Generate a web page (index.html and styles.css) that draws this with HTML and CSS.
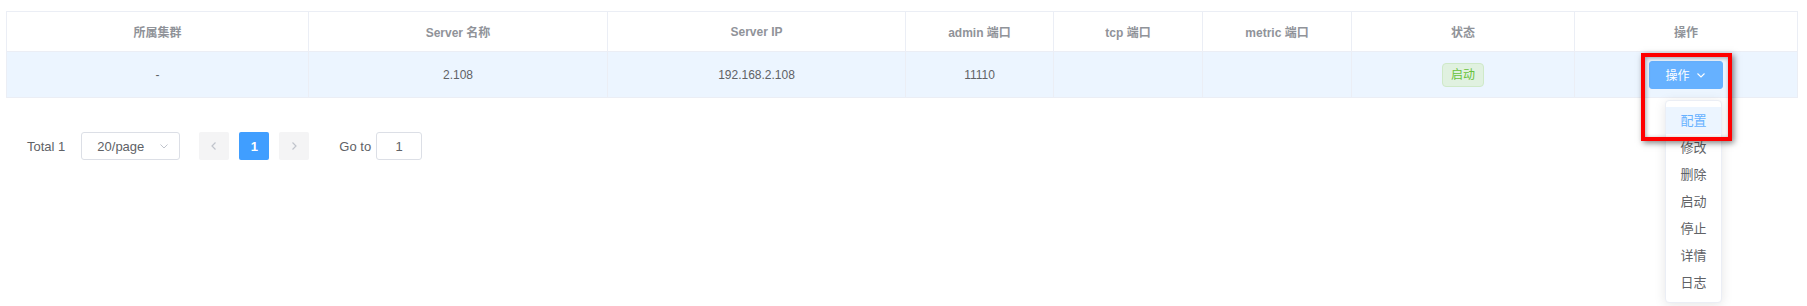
FILE: index.html
```html
<!DOCTYPE html>
<html lang="zh-CN">
<head>
    <meta charset="UTF-8">
    <meta name="viewport" content="width=device-width, initial-scale=1.0">
    <title>Server 列表</title>
    <link rel="stylesheet" href="styles.css">
</head>
<body>
    <div class="page">
        <table class="server-table">
            <colgroup>
                <col class="col-cluster">
                <col class="col-name">
                <col class="col-ip">
                <col class="col-port">
                <col class="col-port2">
                <col class="col-port2">
                <col class="col-status">
                <col class="col-op">
            </colgroup>
            <thead>
                <tr>
                    <th>所属集群</th>
                    <th>Server 名称</th>
                    <th>Server IP</th>
                    <th>admin 端口</th>
                    <th>tcp 端口</th>
                    <th>metric 端口</th>
                    <th>状态</th>
                    <th>操作</th>
                </tr>
            </thead>
            <tbody>
                <tr class="current-row">
                    <td>-</td>
                    <td>2.108</td>
                    <td>192.168.2.108</td>
                    <td>11110</td>
                    <td></td>
                    <td></td>
                    <td><span class="tag tag-success">启动</span></td>
                    <td>
                        <div class="dropdown">
                            <button class="btn btn-primary">操作<svg class="btn-icon" viewBox="0 0 12 12" width="12" height="12"><path d="M2.5 4.5 L6 8 L9.5 4.5" fill="none" stroke="#fff" stroke-width="1.1"/></svg></button>
                            <ul class="dropdown-menu">
                                <li class="active">配置</li>
                                <li>修改</li>
                                <li>删除</li>
                                <li>启动</li>
                                <li>停止</li>
                                <li>详情</li>
                                <li>日志</li>
                            </ul>
                        </div>
                    </td>
                </tr>
            </tbody>
        </table>

        <div class="pagination">
            <span class="total">Total 1</span>
            <div class="sizes">
                <span>20/page</span>
                <svg viewBox="0 0 12 12" width="12" height="12"><path d="M2.5 4.5 L6 8 L9.5 4.5" fill="none" stroke="#c0c4cc" stroke-width="1"/></svg>
            </div>
            <button class="pg-btn" disabled><svg viewBox="0 0 12 12" width="12" height="12"><path d="M7.5 2.5 L4 6 L7.5 9.5" fill="none" stroke="#c0c4cc" stroke-width="1.2"/></svg></button>
            <span class="pg-btn pg-active">1</span>
            <button class="pg-btn" disabled><svg viewBox="0 0 12 12" width="12" height="12"><path d="M4.5 2.5 L8 6 L4.5 9.5" fill="none" stroke="#c0c4cc" stroke-width="1.2"/></svg></button>
            <span class="jump">Go to</span>
            <input class="jump-input" type="text" value="1">
        </div>

        <div class="highlight-box"></div>
    </div>
</body>
</html>
```

FILE: styles.css
```css
html, body {
    margin: 0;
    min-height: 306px;
}
body {
    font-family: "Liberation Sans", "Noto Sans CJK SC", sans-serif;
    background-color: #ffffff;
    color: #606266;
}
.page {
    position: relative;
    box-sizing: border-box;
    min-height: 306px;
    padding: 11px 0 0 6px;
}
.server-table {
    width: 1792px;
    table-layout: fixed;
    border-collapse: separate;
    border-spacing: 0;
    border-top: 1px solid #ebeef5;
    border-left: 1px solid #ebeef5;
    font-size: 12px;
}
.col-cluster { width: 302px; }
.col-name { width: 299px; }
.col-ip { width: 298px; }
.col-port { width: 148px; }
.col-port2 { width: 149px; }
.col-status { width: 223px; }
.col-op { width: 223px; }
th, td {
    box-sizing: border-box;
    padding: 0 10px;
    border-right: 1px solid #ebeef5;
    border-bottom: 1px solid #ebeef5;
    text-align: center;
    vertical-align: middle;
}
th {
    height: 40px;
    color: #909399;
    font-weight: bold;
}
td {
    height: 46px;
    color: #606266;
}
.current-row td {
    background-color: #ecf5ff; /* highlighted row */
}
.tag {
    display: inline-block;
    box-sizing: border-box;
    height: 24px;
    line-height: 22px;
    padding: 0 8px;
    font-size: 12px;
    border-radius: 4px;
    border: 1px solid;
}
.tag-success {
    background-color: #e0f1e0;
    border-color: #cfe9c8;
    color: #67c23a;
}
.dropdown {
    display: inline-block;
    position: relative;
}
.btn {
    display: inline-flex;
    align-items: center;
    box-sizing: border-box;
    height: 28px;
    padding: 0 15px;
    font-family: inherit;
    font-size: 12px;
    border-radius: 3px;
    border: 1px solid;
    cursor: pointer;
}
.btn-primary {
    background-color: #66b1ff; /* hover state */
    border-color: #66b1ff;
    color: #ffffff;
}
.btn-icon {
    margin-left: 5px;
}
.dropdown-menu {
    position: absolute;
    top: 39px;
    left: 16px;
    z-index: 10;
    margin: 0;
    padding: 6px 0;
    list-style: none;
    background: #ffffff;
    border: 1px solid #ebeef5;
    border-radius: 4px;
    box-shadow: 0 2px 12px 0 rgba(0, 0, 0, 0.1);
    white-space: nowrap;
}
.dropdown-menu li {
    padding: 0 14px;
    line-height: 27px;
    font-size: 13px;
    color: #606266;
    text-align: left;
}
.dropdown-menu li.active {
    background-color: #ecf5ff;
    color: #66b1ff;
}
.pagination {
    display: flex;
    align-items: center;
    margin-top: 34px;
    padding-left: 21px;
    height: 28px;
    font-size: 13px;
    color: #606266;
}
.total {
    margin-right: 16px;
}
.sizes {
    display: flex;
    align-items: center;
    justify-content: space-between;
    box-sizing: border-box;
    width: 99px;
    height: 28px;
    padding: 0 9px 0 15px;
    border: 1px solid #dcdfe6;
    border-radius: 3px;
    margin-right: 19px;
}
.pg-btn {
    display: inline-flex;
    align-items: center;
    justify-content: center;
    box-sizing: border-box;
    width: 30px;
    height: 28px;
    margin-right: 10px;
    padding: 0;
    border: none;
    border-radius: 2px;
    background-color: #f4f4f5;
    font-family: inherit;
    font-size: 13px;
}
.pg-active {
    background-color: #409eff;
    color: #ffffff;
    font-weight: bold;
}
.jump {
    margin-left: 20px;
    margin-right: 5px;
}
.jump-input {
    box-sizing: border-box;
    width: 46px;
    height: 28px;
    border: 1px solid #dcdfe6;
    border-radius: 3px;
    text-align: center;
    font-family: inherit;
    font-size: 13px;
    color: #606266;
}
/* annotation drawn over the screenshot */
.highlight-box {
    position: absolute;
    left: 1641px;
    top: 53px;
    width: 91px;
    height: 88px;
    box-sizing: border-box;
    border: 4px solid #ff0000;
    box-shadow: 2px 2px 6px rgba(0, 0, 0, 0.5), inset 1px 1px 4px rgba(0, 0, 0, 0.35);
    z-index: 20;
}
```
